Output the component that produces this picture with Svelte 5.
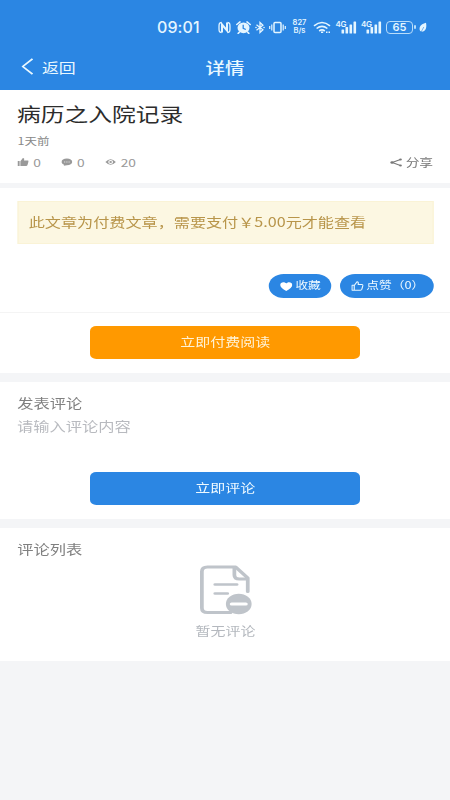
<!-- ArticleDetail -->

<script lang="ts">
  let likes = $state(0);
  let comment = $state("");

  const article = {
    title: "病历之入院记录",
    time: "1天前",
    ups: 0,
    comments: 0,
    views: 20,
    price: "5.00",
  };
  const bars = [4, 6.5, 9, 12];
</script>

<!-- ── Status bar ─────────────────────────────────────────────────────────── -->

<div class="status">
  <span class="clock">09:01</span>
  <svg class="nfc" width="13" height="13" viewBox="0 0 13 13">
    <path d="M3.500 1.500C1 1.500 1 3 1 6.500s0 5 2.500 5M9.500 1.500c2.500 0 2.500 1.500 2.500 5s0 5-2.500 5" fill="none" stroke="#e4f5ff" stroke-width="1.300" />
    <path d="M4 11.500v-8l5 6v-8" fill="none" stroke="#e4f5ff" stroke-width="2" />
  </svg>
  <svg class="alarm" width="15" height="13" viewBox="0 0 15 13">
    <path d="M.8 3.500 4 .9M14.200 3.500 11 .9M3.500 11 2.200 12.400M11.500 11l1.300 1.400" stroke="#e4f5ff" stroke-width="1.600" stroke-linecap="round" />
    <ellipse cx="7.500" cy="6.800" rx="6" ry="5.400" fill="#e4f5ff" />
    <path d="M7.200 3.800v3.500l2.600 1.200" fill="none" stroke="#2b86e3" stroke-width="1.300" />
  </svg>
  <svg class="bt" width="10" height="13" viewBox="0 0 10 13">
    <path d="m1.500 3.800 6.400 5L5 11.500v-10l2.900 2.700-6.400 5" fill="none" stroke="#e4f5ff" stroke-width="1.300" />
    <circle cx="1" cy="6.500" r=".8" fill="#e4f5ff" /><circle cx="9" cy="6.500" r=".8" fill="#e4f5ff" />
  </svg>
  <svg class="vib" width="17" height="13" viewBox="0 0 17 13">
    <rect x="5" y="1.500" width="7" height="10" rx="1" fill="none" stroke="#e4f5ff" stroke-width="1.500" />
    <path d="M2.800 3.500v6M14.200 3.500v6M.7 5v3M16.300 5v3" stroke="#e4f5ff" stroke-width="1.200" />
  </svg>
  <span class="rate"><span>827</span><span>B/s</span></span>
  <svg class="wifi" width="18" height="13" viewBox="0 0 18 13">
    <path d="M1 4.800q8-6.600 16 0M3.600 7.500q5.400-4.400 10.800 0M6.200 10q2.800-2.200 5.600 0" fill="none" stroke="#e4f5ff" stroke-width="1.600" />
    <path d="M8 11.300h2.200M13 11.300h1.500M15.500 11.300H17" stroke="#e4f5ff" stroke-width="1.500" />
  </svg>
  {#each [0, 1] as sim (sim)}
    <span class="signal">
      <span class="gen">4G</span>
      <svg width="17" height="13" viewBox="0 0 17 13">
        {#each bars as h, i}
          <rect x={i * 4 + 1.5} y={12.5 - h} width="2.600" height={h} rx=".6" fill="#e4f5ff" />
        {/each}
      </svg>
    </span>
  {/each}
  <span class="battery">65</span>
  <i class="nub"></i>
  <svg class="leaf" width="8" height="11" viewBox="0 0 8 11">
    <path d="M7 .8C3 1.800.5 4 .6 7c0 1.500.7 2.300 1.700 2.600C6 10 8.200 6.500 7 .8z" fill="#e4f5ff" />
    <path d="M1.800 10.500 4.800 5" stroke="#2b86e3" stroke-width=".6" />
  </svg>
</div>

<!-- ── Page ───────────────────────────────────────────────────────────────── -->

<div class="page">
  <header>
    <div class="back">
      <svg width="10" height="17" viewBox="0 0 10 17">
        <path d="M9 .9 1.200 8.500 9 16.100" fill="none" stroke="#e9f8ff" stroke-width="1.500" />
      </svg>
      <span>返回</span>
    </div>
    <h1>详情</h1>
    <div class="back"></div>
  </header>

  <section class="head">
    <h2>{article.title}</h2>
    <div class="time">{article.time}</div>
    <div class="meta">
      <span class="stat up">
        <svg width="9" height="8" viewBox="0 0 9 8">
          <path d="M0 3h1.700v5H0zM2.300 3.200 4.300 0c1 0 1.300.7.9 2.500H8c.8 0 1 .6.8 1.200L7.900 7.200c-.2.600-.5.800-1 .8H2.300z" fill="#999" />
        </svg>
        {article.ups}
      </span>
      <span class="stat cm">
        <svg width="9" height="8" viewBox="0 0 9 8">
          <path d="M4.500.5C7 .5 8.800 2 8.800 3.900S7 7.200 4.500 7.200L2 7.800l.3-1.100C1 6.100.2 5.100.2 3.900.2 2 2 .5 4.500.5z" fill="#999" />
          <path d="M2.200 4h1M4 4h1M5.800 4h1" stroke="#ddd" stroke-width=".9" />
        </svg>
        {article.comments}
      </span>
      <span class="stat vw">
        <svg width="9" height="8" viewBox="0 0 9 8">
          <path d="M.3 4q4.200-5.600 8.400 0-4.200 5.600-8.400 0z" fill="#999" />
          <circle cx="4.500" cy="4" r="1.500" fill="#999" stroke="#fff" stroke-width=".9" />
        </svg>
        {article.views}
      </span>
      <span class="share">
        <svg width="10" height="9" viewBox="0 0 10 9">
          <path d="M8.300 1.500 1.700 4.500l6.600 3" fill="none" stroke="#777" stroke-width=".9" />
          <circle cx="1.600" cy="4.500" r="1.300" fill="#777" /><circle cx="8.400" cy="1.500" r="1.100" fill="#777" /><circle cx="8.400" cy="7.500" r="1.100" fill="#777" />
        </svg>
        分享
      </span>
    </div>
  </section>

  <section class="body">
    <div class="notice">此文章为付费文章，需要支付￥{article.price}元才能查看</div>
    <div class="pills">
      <button class="pill fav">
        <svg width="10" height="9" viewBox="0 0 10 9">
          <path d="M5 9C2 7 .2 5 .2 3 .2 1.200 1.300.2 2.700.2 3.700.2 4.600.8 5 1.500 5.400.8 6.300.2 7.300.2 8.700.2 9.800 1.200 9.800 3 9.800 5 8 7 5 9z" fill="#fff" />
        </svg>
        <span>收藏</span>
      </button>
      <button class="pill like" onclick={() => likes++}>
        <svg width="10" height="10" viewBox="0 0 10 10">
          <path d="M.6 4.300h1.800v4.900H.6zM2.400 4.500 4.600.8c1 .1 1.300.9.9 2.700h2.900c.8 0 1.100.6.9 1.200l-.9 3.700c-.2.600-.5.800-1 .8h-5" fill="none" stroke="#e9f8ff" stroke-width=".9" stroke-linejoin="round" />
        </svg>
        <span>点赞（{likes}）</span>
      </button>
    </div>
  </section>

  <section class="pay">
    <button class="btn orange">立即付费阅读</button>
  </section>

  <section class="post">
    <div class="label">发表评论</div>
    <textarea placeholder="请输入评论内容" bind:value={comment}></textarea>
    <button class="btn">立即评论</button>
  </section>

  <section class="list">
    <div class="label">评论列表</div>
    <div class="empty">
      <svg width="42" height="50" viewBox="0 0 42 50">
        <g fill="none" stroke="#bfc4ca" stroke-width="3" stroke-linecap="round" stroke-linejoin="round">
          <path d="M24.500 47.500H6q-4.500 0-4.500-4.500V6.500Q1.500 2 6 2h22.500L38.200 13v13.500" />
          <path d="M27.500 2.500V10q0 4 4 4h6" />
          <path d="M12 19.500h17.500M12 28.500h10" stroke-width="2.600" />
        </g>
        <circle cx="31" cy="39" r="10.300" fill="#bfc4ca" />
        <path d="M25.300 39h11.400" stroke="#fff" stroke-width="3" stroke-linecap="round" />
      </svg>
      <span>暂无评论</span>
    </div>
  </section>
</div>

<!-- ── Styles ─────────────────────────────────────────────────────────────── -->

<style>
  :global(body) { background:#f4f5f7; overflow:hidden; font-family:"Noto Sans CJK SC","Noto Sans",sans-serif; }

  .status { display:flex; align-items:center; height:45px; padding-top:9px; box-sizing:border-box; background:#2b86e3; color:#e4f5ff; font-family:Inter,Roboto,sans-serif; }
  .status svg { display:block; flex-shrink:0; }
  .clock { margin-left:157px; width:44px; font-size:16px; font-weight:500; line-height:18px; letter-spacing:.1px; white-space:nowrap; }
  .nfc { margin-left:17px; }
  .alarm { margin-left:5px; }
  .bt { margin-left:4px; }
  .vib { margin-left:4px; }
  .rate { display:flex; flex-direction:column; width:17px; margin-left:5px; font-size:7.500px; line-height:8px; font-weight:600; text-align:center; }
  .rate span { height:8px; }
  .wifi { margin-left:5px; }
  .signal { display:flex; align-items:center; width:21px; margin-left:4.500px; }
  .signal svg { margin-left:-5px; }
  .gen { width:9px; flex-shrink:0; font-size:8px; font-weight:600; line-height:7px; letter-spacing:-.3px; align-self:flex-start; }
  .battery { width:27px; height:13px; box-sizing:border-box; margin-left:4px; border:1px solid #b9ddfa; border-radius:4px; font-size:11px; font-weight:600; line-height:11px; text-align:center; }
  .nub { width:2px; height:4px; margin-left:1px; background:#b9ddfa; border-radius:1px; }
  .leaf { margin-left:3px; }

  /* 360 units wide, stretched to fill the screen */
  .page { width:360px; transform:scaleX(1.25); transform-origin:0 0; }
  .page svg { display:block; flex-shrink:0; }

  header { display:flex; align-items:center; height:45px; padding-bottom:2px; box-sizing:border-box; background:#2b86e3; color:#e9f8ff; }
  .back { display:flex; align-items:center; gap:7px; width:104px; padding-left:16.500px; box-sizing:border-box; font-size:13.500px; line-height:20px; }
  h1 { flex:1; margin:0; font-size:15.500px; line-height:22px; font-weight:500; text-align:center; }

  section { background:#fff; padding:0 13.500px; display:flow-root; }
  button { border:0; padding:0; font-family:inherit; color:#eef9ff; background:#2b86e3; }

  .head { height:93px; }
  h2 { margin:12px 0 0; font-size:19px; line-height:24px; font-weight:400; color:#2c2c2c; }
  .time { margin-top:8px; padding-left:.5px; font-size:10px; line-height:14px; color:#888; }
  .meta { display:flex; align-items:center; margin-top:7px; height:14px; font-size:11px; line-height:14px; color:#999; }
  .stat { display:flex; align-items:center; gap:4px; }
  .up, .cm { width:35px; }
  .share { display:flex; align-items:center; gap:2.500px; margin-left:auto; font-size:11px; color:#777; }

  .body { height:125px; margin-top:5px; box-sizing:border-box; border-bottom:1px solid #f4f4f4; }
  .notice { height:43px; box-sizing:border-box; margin-top:13px; padding-left:8.500px; border:1px solid #faf3d6; background:#fcf7e2; color:#b8954a; font-size:12.900px; line-height:39px; white-space:nowrap; }
  .pills { display:flex; justify-content:flex-end; gap:7px; margin-top:30px; }
  .pill { display:flex; align-items:center; height:24px; padding-left:9.500px; gap:2px; border-radius:12px; font-size:10.200px; line-height:22px; box-sizing:border-box; white-space:nowrap; }
  .pill span { height:24px; }
  .fav { width:49.700px; }
  .like { width:75px; }

  .pay { height:60px; }
  .btn { display:block; width:216.500px; height:33px; margin:0 auto; padding:0 0 2px .5px; box-sizing:border-box; border-radius:5px; font-size:12px; line-height:31px; }
  .orange { margin-top:13px; background:#ff9900; color:#fff3d6; }

  .label { margin-top:13px; padding-left:.3px; font-size:13px; line-height:16px; color:#808080; }
  .post { height:137px; margin-top:9px; }
  textarea { display:block; width:100%; height:45px; margin:7px 0 0; padding:0; border:0; outline:0; resize:none; font:13px/16px "Noto Sans CJK SC",sans-serif; color:#333; }
  textarea::placeholder { color:#b8babf; opacity:1; }
  .post .btn { margin-top:9px; }

  .list { height:133px; margin-top:9px; }
  .empty { display:flex; flex-direction:column; align-items:center; margin-top:8px; padding-left:1px; font-size:12px; line-height:16px; color:#b4b8be; }
  .empty span { margin-top:8px; }
</style>
